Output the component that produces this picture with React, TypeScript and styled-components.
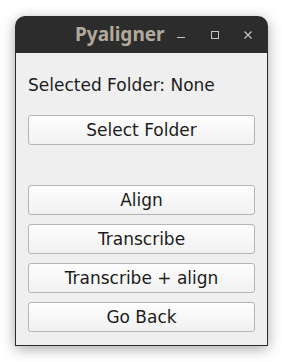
import React from "react";
import styled, { createGlobalStyle } from "styled-components";

const Global = createGlobalStyle`
  html, body { margin: 0; padding: 0; background: #ffffff; }
  body { width: 282px; height: 362px; overflow: hidden; }
`;

const Page = styled.div`
  width: 282px;
  height: 362px;
  padding: 16px 14px 0 15px;
  box-sizing: border-box;
`;

const Window = styled.div`
  width: 253px;
  height: 330px;
  border-radius: 10px 10px 0 0;
  box-shadow: 0 3px 14px rgba(0, 0, 0, 0.35);
  display: flex;
  flex-direction: column;
  overflow: hidden;
`;

const TitleBar = styled.div`
  height: 37px;
  background: #2c2c2c;
  display: flex;
  align-items: center;
  flex-shrink: 0;
  padding-right: 3px;
`;

const Title = styled.div`
  flex: 1;
  text-align: center;
  font-family: "Noto Sans", sans-serif;
  font-weight: 700;
  font-size: 19px;
  color: #b3aa9c;
  padding-left: 60px;
  margin-top: -1px;
`;

const Ctl = styled.div`
  width: 34px;
  height: 37px;
  display: flex;
  align-items: center;
  justify-content: center;
`;

const Body = styled.div`
  flex: 1;
  background: #efefef;
  border: 1px solid #2c2c2c;
  border-top: none;
  padding: 0 12px;
  display: flex;
  flex-direction: column;
`;

const Label = styled.div`
  font-family: "DejaVu Sans", sans-serif;
  font-size: 17px;
  color: #1c1c1c;
  margin-top: 23px;
  height: 18px;
  line-height: 18px;
`;

const Button = styled.button<{ $mt?: number }>`
  height: 30px;
  margin-top: ${(p) => p.$mt ?? 9}px;
  width: 100%;
  box-sizing: border-box;
  border: 1px solid #b5b5b5;
  border-radius: 3px;
  background: linear-gradient(#fdfdfd, #f1f1f1);
  font-family: "DejaVu Sans", sans-serif;
  font-size: 17px;
  color: #1c1c1c;
  padding: 0;
  line-height: 28px;
`;

export default function App() {
  return (
    <>
      <Global />
      <Page>
        <Window>
          <TitleBar>
            <Title>Pyaligner</Title>
            <Ctl>
              <svg width="10" height="10" viewBox="0 0 10 10">
                <line x1="1" y1="7.5" x2="9" y2="7.5" stroke="#c4c4c4" strokeWidth="1" />
              </svg>
            </Ctl>
            <Ctl>
              <svg width="10" height="10" viewBox="0 0 10 10">
                <rect x="1.5" y="1.5" width="7" height="7" fill="none" stroke="#c4c4c4" strokeWidth="1" />
              </svg>
            </Ctl>
            <Ctl>
              <svg width="10" height="10" viewBox="0 0 10 10">
                <path d="M1.5 1.5 L8.5 8.5 M8.5 1.5 L1.5 8.5" stroke="#c4c4c4" strokeWidth="1.2" />
              </svg>
            </Ctl>
          </TitleBar>
          <Body>
            <Label>Selected Folder: None</Label>
            <Button $mt={21}>Select Folder</Button>
            <Button $mt={40}>Align</Button>
            <Button>Transcribe</Button>
            <Button>Transcribe + align</Button>
            <Button>Go Back</Button>
          </Body>
        </Window>
      </Page>
    </>
  );
}
